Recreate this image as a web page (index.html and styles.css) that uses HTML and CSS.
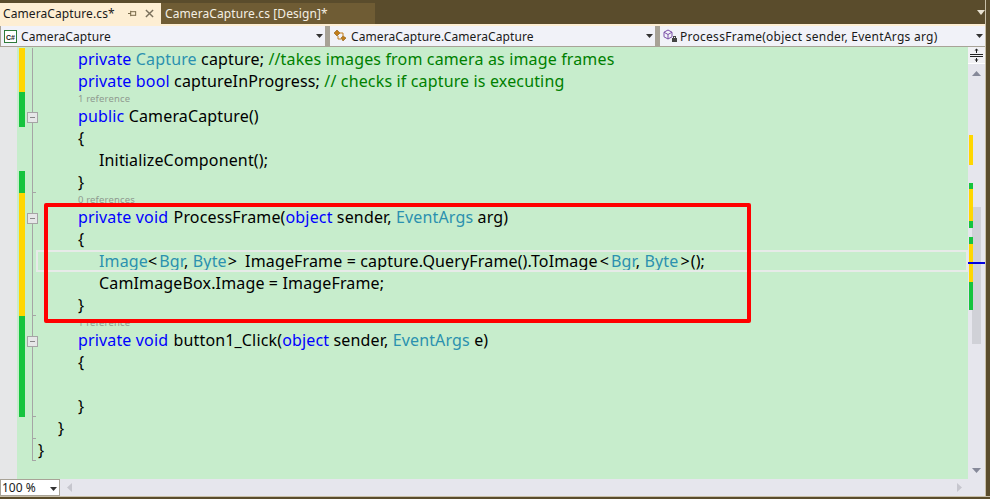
FILE: index.html
```html
<!DOCTYPE html>
<html lang="en">
<head>
<meta charset="utf-8">
<title>CameraCapture.cs</title>
<link rel="stylesheet" href="styles.css">
</head>
<body>
<div class="window">
  <div class="main">
    <div class="tabs">
      <div class="tab active">
        <span class="tab-name">CameraCapture.cs*</span>
        <svg class="tab-icon" width="9" height="9" viewBox="0 0 10 10"><path d="M0 5h3M3 2v6M3 3h6M3 7h6M8.500 3v4" fill="none" stroke="#6b5c3b"/></svg>
        <svg class="tab-icon close" width="9" height="9" viewBox="0 0 10 10"><path d="M1 1l8 8M9 1l-8 8" fill="none" stroke="#7a705c" stroke-width="1.600"/></svg>
      </div>
      <div class="tab inactive"><span class="tab-name">CameraCapture.cs [Design]*</span></div>
      <div class="tab-spacer">
        <svg class="overflow" width="8" height="5" viewBox="0 0 8 5"><path d="M0 0h8L4 5z" fill="#e8e2d2"/></svg>
      </div>
    </div>
    <div class="nav">
      <div class="combo c1">
        <svg class="ico" width="13" height="13" viewBox="0 0 13 13"><rect x=".5" y=".5" width="12" height="12" fill="#fff" stroke="#2d7a3a"/><text x="2" y="9.500" class="csharp">C#</text></svg>
        <span class="combo-text">CameraCapture</span>
        <svg class="caret" width="7" height="4" viewBox="0 0 7 4"><path d="M0 0h7L3.500 4z" fill="#333"/></svg>
      </div>
      <div class="combo c2">
        <svg class="ico" width="15" height="14" viewBox="0 0 15 14"><path d="M1 4l3-3 3 3-3 3zM8 9l2-2 3 2-3 3z" fill="#c27d1a" stroke="#8a5a10" stroke-width=".6"/><path d="M6 4h4v3M5 7v3h3" fill="none" stroke="#c27d1a"/></svg>
        <span class="combo-text">CameraCapture.CameraCapture</span>
        <svg class="caret" width="7" height="4" viewBox="0 0 7 4"><path d="M0 0h7L3.500 4z" fill="#333"/></svg>
      </div>
      <div class="combo c3">
        <svg class="ico" width="15" height="14" viewBox="0 0 15 14"><path d="M5 1l4 2.200v4.600L5 10 1 7.800V3.200zM1 3.200l4 2.300 4-2.300M5 5.500V10" fill="none" stroke="#7b4fa8"/><rect x="9" y="9" width="5" height="4" fill="#444"/><rect x="10.500" y="7.500" width="2" height="2" fill="none" stroke="#444"/></svg>
        <span class="combo-text">ProcessFrame(object sender, EventArgs arg)</span>
        <svg class="caret" width="7" height="4" viewBox="0 0 7 4"><path d="M0 0h7L3.500 4z" fill="#333"/></svg>
      </div>
    </div>
    <div class="editor-row">
      <div class="editor">
        <div class="margin"></div>
        <div class="code">
          <div class="row edit"><i class="l2"></i><span class="k">private</span> <span class="t">Capture</span> capture; <span class="c">//takes images from camera as image frames</span></div>
          <div class="row edit"><i class="l2"></i><span class="k">private</span> <span class="k">bool</span> captureInProgress; <span class="c">// checks if capture is executing</span></div>
          <div class="lens saved"><i class="l2"></i>1 reference</div>
          <div class="row saved fold"><i class="l2"></i><span class="k">public</span> CameraCapture()</div>
          <div class="row"><i class="l2"></i>{</div>
          <div class="row"><i class="l3"></i>InitializeComponent();</div>
          <div class="row saved tick"><i class="l2"></i>}</div>
          <div class="lens edit"><i class="l2"></i>0 references</div>
          <div class="row edit fold"><i class="l2"></i><span class="k">private</span> <span class="k">void</span> <span class="m-name">ProcessFrame(</span><span class="k">object</span> sender, <span class="t">EventArgs</span> arg)</div>
          <div class="row edit"><i class="l2"></i>{</div>
          <div class="row edit current"><i class="l3"></i><span class="t">Image</span><span class="lt">&lt;</span><span class="t">Bgr</span>, <span class="t">Byte</span><span class="gt">&gt;</span>ImageFrame = capture.QueryFrame().ToImage<span class="lt second">&lt;</span><span class="t">Bgr</span>, <span class="t">Byte</span><span class="gt-end">&gt;</span>();</div>
          <div class="row edit"><i class="l3"></i>CamImageBox.Image = ImageFrame;</div>
          <div class="row edit tick"><i class="l2"></i>}</div>
          <div class="lens saved"><i class="l2"></i>1 reference</div>
          <div class="row saved fold"><i class="l2"></i><span class="k">private</span> <span class="k">void</span> <span class="m-name">button1_Click(</span><span class="k">object</span> sender, <span class="t">EventArgs</span> e)</div>
          <div class="row saved"><i class="l2"></i>{</div>
          <div class="row saved"></div>
          <div class="row saved tick"><i class="l2"></i>}</div>
          <div class="row tick"><i class="l1"></i>}</div>
          <div class="row tick last"><i class="l0"></i>}</div>
        </div>
        <div class="highlight"></div>
      </div>
      <div class="vscroll">
        <div class="split">
          <svg width="13" height="14" viewBox="0 0 13 14"><path d="M0 6.500h13M0 8.500h13M6.500 1v4M6.500 10v4" stroke="#222" fill="none"/><path d="M4.500 2.500l2-2 2 2zM4.500 11.500l2 2 2-2z" fill="#222"/></svg>
        </div>
        <svg class="arrow-up" width="9" height="5" viewBox="0 0 9 5"><path d="M4.500 0L9 5H0z" fill="#868999"/></svg>
        <div class="thumb"></div>
        <div class="marks">
          <b class="m m1 y"></b><b class="m m2 g"></b><b class="m m3 y"></b><b class="m m4 g"></b><b class="m m5 g"></b><b class="m m6 y"></b><b class="m m7 g"></b>
        </div>
        <div class="caretmark"></div>
        <svg class="arrow-down" width="9" height="5" viewBox="0 0 9 5"><path d="M0 0h9L4.500 5z" fill="#868999"/></svg>
      </div>
    </div>
    <div class="hbar">
      <div class="zoombox"><span>100 %</span><svg class="caret" width="7" height="4" viewBox="0 0 7 4"><path d="M0 0h7L3.500 4z" fill="#333"/></svg></div>
      <svg class="arrow-left" width="5" height="9" viewBox="0 0 5 9"><path d="M5 0v9L0 4.500z" fill="#c6c6ce"/></svg>
      <svg class="arrow-right" width="5" height="9" viewBox="0 0 5 9"><path d="M0 0v9l5-4.500z" fill="#c6c6ce"/></svg>
    </div>
  </div>
  <div class="foot"></div>
</div>
</body>
</html>
```
FILE: styles.css
```css
* { box-sizing: border-box; }
html, body { margin: 0; padding: 0; }
body { width: 990px; height: 499px; overflow: hidden; background: #5a4c2c; font-family: "Noto Sans", "Liberation Sans", sans-serif; }
.window { width: 990px; height: 499px; display: flex; flex-direction: column; }
.main { width: 986px; height: 496px; display: flex; flex-direction: column; border-right: 1px solid #c8bfa8; }
.tabs { height: 24px; padding-top: 3px; display: flex; margin-right: -1px; }
.tab { height: 21px; display: flex; align-items: center; font-size: 12px; white-space: nowrap; }
.tab.active { width: 161px; background: #fdeed3; color: #1a1a1a; padding-left: 3px; }
.tab.inactive { width: 214px; background: #6f5c34; color: #f4efe3; padding-left: 4px; }
.tab-name { letter-spacing: .1px; }
.tab-icon { margin-left: 13px; flex: none; }
.tab-icon.close { margin-left: 8px; }
.tab-spacer { flex: 1; display: flex; justify-content: flex-end; align-items: center; }
.overflow { margin-top: -3px; margin-right: 1px; }
.nav { height: 23px; background: #a8a397; border-top: 2px solid #fdeed3; border-bottom: 1px solid #a8a397; display: flex; gap: 5px; padding-left: 1px; }
.combo { height: 20px; background: #f1f2f8; display: flex; align-items: center; font-size: 12px; color: #1a1a1a; position: relative; padding-left: 3px; white-space: nowrap; }
.c1 { width: 324px; }
.c2 { width: 325px; }
.c3 { flex: 1; }
.combo-text { margin-left: 4px; letter-spacing: .1px; }
.c2 .combo-text { margin-left: 3px; }
.c3 .combo-text { margin-left: 2px; letter-spacing: .27px; }
.combo .caret { position: absolute; right: 2px; top: 8px; }
.csharp { font: bold 7px "Liberation Sans", sans-serif; fill: #222; }
.editor-row { flex: 1; display: flex; min-height: 0; }
.editor { flex: 1; position: relative; background: #c7edcc; display: flex; }
.margin { width: 17px; background: #e6e7e8; flex: none; }
.code { flex: 1; padding-top: 1px; display: flex; flex-direction: column; font-size: 16px; letter-spacing: .15px; color: #000; }
.row { height: 22px; line-height: 22px; flex: none; position: relative; white-space: pre; border-left: 6px solid transparent; margin-left: 2px; }
.lens { height: 13px; line-height: 13px; flex: none; font-size: 9.500px; color: #8f9a90; position: relative; border-left: 6px solid transparent; margin-left: 2px; white-space: pre; letter-spacing: .15px; }
.edit { border-left-color: #ffd700; }
.saved { border-left-color: #16c43e; }
.row > i, .lens > i { display: inline-block; font-style: normal; }
.l0 { width: 13px; }
.l1 { width: 33px; }
.l2 { width: 53px; }
.l3 { width: 74px; }
.k { color: #0000ff; }
.t { color: #2b91af; }
.c { color: #008000; }
.m-name { margin-left: 1px; }
.lt { margin-right: 2px; }
.lt.second { margin-left: 2px; }
.gt { margin: 0 8px 0 1px; }
.gt-end { margin: 0 1px 0 2px; }
.row::before, .lens::before { content: ""; position: absolute; left: 7px; top: 0; bottom: 0; border-left: 1px solid #a5a5a5; }
.tick::after { content: ""; position: absolute; left: 7px; bottom: 0; width: 4px; border-bottom: 1px solid #a5a5a5; }
.fold::after { content: ""; position: absolute; left: 2px; top: 7px; width: 9px; height: 9px; background: #e6e7e8 linear-gradient(#888, #888) center / 5px 1px no-repeat; border: 1px solid #a5a5a5; }
.current::after { content: ""; position: absolute; left: 11px; right: 0; top: 0; bottom: 0; border: 2px solid #e7eae8; }
.highlight { position: absolute; left: 44px; top: 156px; width: 707px; height: 120px; border: 4px solid #ff0000; border-radius: 2px; }
.vscroll { width: 17px; background: #e6e6ed; position: relative; flex: none; }
.split { height: 17px; display: flex; align-items: center; justify-content: center; background: #f1f1f4; border-bottom: 1px solid #fff; }
.arrow-up { position: absolute; left: 4px; top: 24px; }
.arrow-down { position: absolute; left: 4px; top: 421px; }
.thumb { position: absolute; left: 4px; top: 160px; width: 9px; height: 137px; background: #d0d1d7; }
.marks { position: absolute; left: 1px; top: 0; width: 4px; }
.m { position: absolute; left: 0; width: 4px; }
.y { background: #ffd700; }
.g { background: #16c43e; }
.m1 { top: 88px; height: 30px; }
.m2 { top: 136px; height: 6px; }
.m3 { top: 142px; height: 32px; }
.m4 { top: 174px; height: 7px; }
.m5 { top: 190px; height: 7px; }
.m6 { top: 197px; height: 38px; }
.m7 { top: 235px; height: 28px; }
.caretmark { position: absolute; left: 0; top: 215px; width: 17px; height: 2px; background: #0000e0; }
.hbar { height: 17px; background: #e6e6ed; display: flex; align-items: center; position: relative; flex: none; }
.zoombox { width: 60px; height: 17px; background: #fff; border: 1px solid #a8a397; display: flex; align-items: center; font-size: 12px; color: #1a1a1a; padding-left: 1px; position: relative; }
.zoombox .caret { position: absolute; right: 2px; top: 7px; }
.arrow-left { margin-left: 7px; }
.arrow-right { position: absolute; left: 957px; top: 4px; }
.foot { height: 3px; background: #5a4c2c; border-top: 1px solid #c8bfa8; }
```
